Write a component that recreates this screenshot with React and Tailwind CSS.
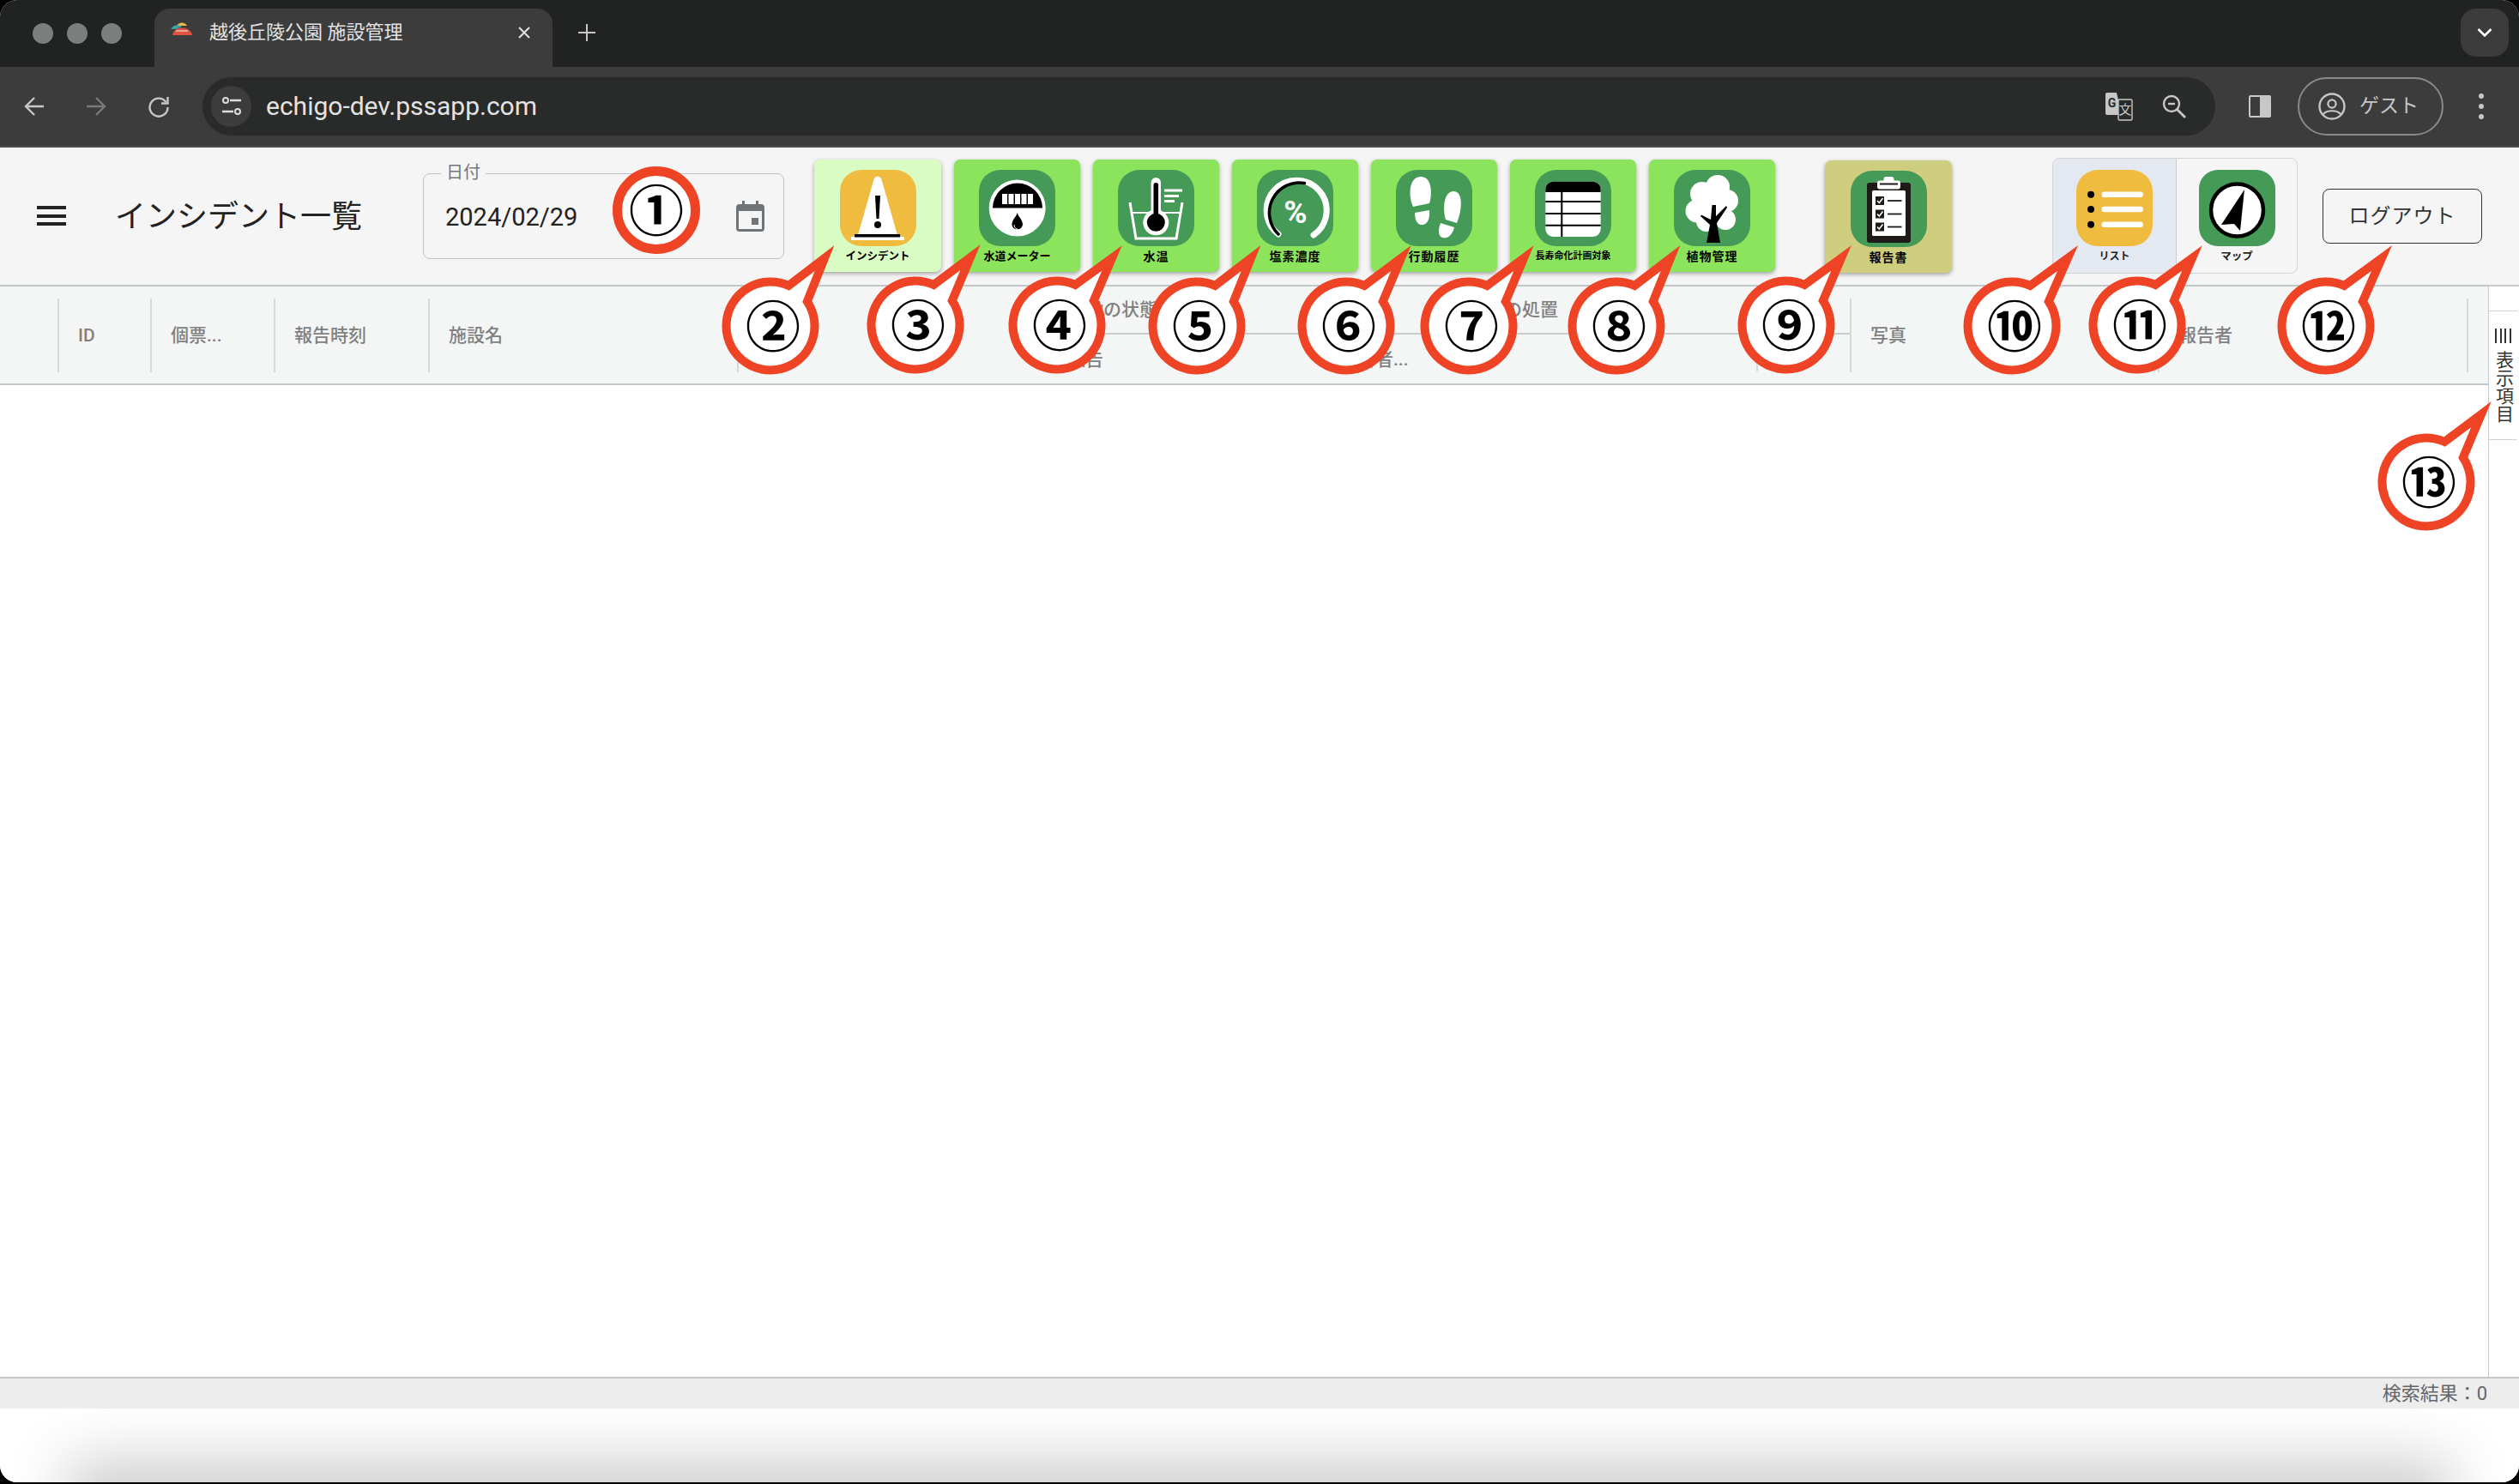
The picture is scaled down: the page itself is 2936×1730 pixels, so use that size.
import React from "react";

const YELLOW = "#efbc3f";
const GREEN = "#449a56";

function IconBox({ color = GREEN, children }) {
  return (
    <svg viewBox="0 0 89 89" className="block h-[89px] w-[89px]">
      <rect width="89" height="89" rx="25" fill={color} />
      {children}
    </svg>
  );
}

const IncidentIcon = () => (
  <IconBox color={YELLOW}>
    <path d="M39 13 C40 6 48 6 49 13 L67 76 L21 76 Z" fill="#fff" />
    <rect x="13" y="78" width="62" height="4" fill="#fff" />
    <rect x="17" y="75" width="53" height="3.5" fill="#000" />
    <path d="M41 30 L47 30 L45.5 57 L42.5 57 Z" fill="#000" />
    <circle cx="44" cy="64" r="4" fill="#000" />
  </IconBox>
);

const MeterIcon = () => (
  <IconBox>
    <circle cx="44.7" cy="44.5" r="33" fill="#fff" />
    <path d="M16 44.5 A29 29 0 0 1 74 44.5 Z" fill="#000" />
    {[27, 34.5, 42, 49.5, 57].map((x) => (
      <rect key={x} x={x} y="28" width="6" height="12" fill="#fff" />
    ))}
    <path d="M44.7 50 C46 55 51 58 51 64 A6.4 6.4 0 0 1 38.4 64 C38.4 58 43.5 55 44.7 50 Z" fill="#000" />
    <path d="M41 64 C41 67 43 69 45 69" stroke="#fff" strokeWidth="1" fill="none" />
  </IconBox>
);

const WaterTempIcon = () => (
  <IconBox>
    <path d="M14 38 L21 80 L68 80 L75 38" stroke="#fff" strokeWidth="3" fill="none" />
    <path d="M17 50 H72" stroke="#fff" strokeWidth="2" />
    <path d="M54 24 H75 M54 30.5 H71 M54 36.5 H66" stroke="#fff" strokeWidth="3" />
    <rect x="38.6" y="9" width="11.4" height="48" rx="5.7" fill="#fff" />
    <circle cx="44.3" cy="61.3" r="15" fill="#fff" />
    <rect x="41.5" y="15" width="5.6" height="44" rx="2.8" fill="#000" />
    <circle cx="44.3" cy="61.3" r="10.5" fill="#000" />
  </IconBox>
);

const ChlorineIcon = () => (
  <IconBox>
    <path d="M25 75 A35 35 0 1 1 66 76" stroke="#fff" strokeWidth="7" strokeLinecap="round" fill="none" />
    <path d="M25 75 A35 35 0 0 1 55.5 15.5" stroke="#000" strokeWidth="3.6" strokeLinecap="round" fill="none" />
    <text x="45" y="62" textAnchor="middle" fontSize="37" fontWeight="700" fill="#fff" fontFamily="Roboto, sans-serif">%</text>
  </IconBox>
);

const StepsIcon = () => (
  <IconBox>
    <g fill="#fff">
      <path d="M20 43 C14 30 15 8 29 8 C43 8 42 30 39 39 Z" />
      <path d="M22 50 L39 47 C40 58 36 65 29 64 C24 63 22 57 22 50 Z" />
      <path d="M58 58 C54 45 56 25 67 25 C78 25 78 44 71 62 Z" />
      <path d="M52 62 L68 67 C66 76 60 81 54 79 C49 77 49 70 52 62 Z" />
    </g>
  </IconBox>
);

const TableIcon = () => (
  <IconBox>
    <rect x="12.3" y="13.7" width="64.4" height="64.3" rx="9" fill="#fff" />
    <path d="M12.3 26 V22.7 A9 9 0 0 1 21.3 13.7 H67.7 A9 9 0 0 1 76.7 22.7 V26 Z" fill="#000" />
    <path d="M12.3 37 H76.7 M12.3 51 H76.7 M12.3 64.7 H76.7 M31.3 25 V78" stroke="#000" strokeWidth="2" />
  </IconBox>
);

const TreeIcon = () => (
  <IconBox>
    <g fill="#fff">
      <circle cx="51" cy="20" r="14" />
      <circle cx="33" cy="28" r="14" />
      <circle cx="27" cy="48" r="13.5" />
      <circle cx="62" cy="36" r="13" />
      <circle cx="60" cy="58" r="12" />
      <circle cx="38" cy="60" r="12" />
      <circle cx="45" cy="40" r="21" />
    </g>
    <path d="M38 85 L42 64 L31 54 L32 52.5 L43 58 L44.5 41 L49 41 L49 54 L61 42 L62 44 L50 62 L54 85 Z" fill="#000" />
  </IconBox>
);

const ReportIcon = () => (
  <IconBox>
    <rect x="19" y="14" width="51" height="70" rx="3" fill="#1f1a17" />
    <rect x="25" y="23" width="39" height="53" rx="1.5" fill="#fff" />
    <rect x="38.5" y="7" width="12" height="8" rx="3" fill="#fff" />
    <rect x="31" y="11.5" width="27" height="10" rx="3" fill="#fff" />
    <rect x="34" y="14.5" width="21" height="2" fill="#1f1a17" />
    {[35, 50.5, 65.5].map((y) => (
      <g key={y}>
        <rect x="29" y={y - 5} width="10" height="10" fill="#1f1a17" />
        <path d={`M31 ${y} L33.3 ${y + 2.5} L37.5 ${y - 3}`} stroke="#fff" strokeWidth="1.5" fill="none" />
        <path d={`M43 ${y} H59.5`} stroke="#1f1a17" strokeWidth="1.8" />
      </g>
    ))}
  </IconBox>
);

const ListIcon = () => (
  <IconBox color={YELLOW}>
    {[28.7, 46, 63.7].map((y) => (
      <g key={y}>
        <circle cx="17" cy={y} r="4" fill="#000" />
        <rect x="29.5" y={y - 3.3} width="48.5" height="6.6" rx="3.3" fill="#fff" />
      </g>
    ))}
  </IconBox>
);

const MapIcon = () => (
  <svg viewBox="0 0 89 89" className="block h-[89px] w-[89px]">
    <rect width="89" height="89" rx="22" fill={GREEN} />
    <circle cx="44.5" cy="47" r="30.5" fill="#fff" stroke="#000" strokeWidth="4.5" />
    <path d="M53 23 L26 64 L41 63 L48 71 Z" fill="#000" />
  </svg>
);

function Tile({ bg, label, labelClass, Icon, width = "w-[147px]" }) {
  return (
    <div className={`flex h-[131px] flex-col items-center rounded-[7px] pt-[12px] shadow-[0_2px_5px_rgba(0,0,0,0.35)] ${width} ${bg}`}>
      <Icon />
      <span className={`mt-[3px] whitespace-nowrap font-bold leading-[18px] text-black ${labelClass}`}>{label}</span>
    </div>
  );
}

// numbered callout balloons drawn on top of the screenshot
const CALLOUTS = [
  ["②", 898, 380, 978, 283],
  ["③", 1067, 379, 1148, 282],
  ["④", 1232, 379, 1313, 283],
  ["⑤", 1395, 380, 1475, 283],
  ["⑥", 1569, 380, 1650, 283],
  ["⑦", 1712, 380, 1793, 283],
  ["⑧", 1884, 380, 1964, 283],
  ["⑨", 2082, 379, 2163, 283],
  ["⑩", 2345, 380, 2427, 283],
  ["⑪", 2491, 379, 2572, 283],
  ["⑫", 2711, 380, 2793, 283],
  ["⑬", 2828, 562, 2909, 465],
];

function balloonPath(cx, cy, tx, ty) {
  const r = 51.5;
  const a1 = (-33.7 * Math.PI) / 180;
  const a2 = (-65.7 * Math.PI) / 180;
  const x1 = cx + r * Math.cos(a1);
  const y1 = cy + r * Math.sin(a1);
  const x2 = cx + r * Math.cos(a2);
  const y2 = cy + r * Math.sin(a2);
  return `M${x1} ${y1} A${r} ${r} 0 1 1 ${x2} ${y2} L${tx - 17} ${ty + 18} Z`;
}

function Callouts() {
  const textProps = {
    textAnchor: "middle",
    dominantBaseline: "central",
    fontSize: 64,
    fontWeight: 700,
    fill: "#000",
    fontFamily: "'Noto Sans CJK JP', sans-serif",
  };
  return (
    <svg className="pointer-events-none absolute left-0 top-0" width="2936" height="1730">
      <circle cx="765" cy="245" r="45.5" fill="#fff" stroke="#ee4324" strokeWidth="11" />
      <text x="765" y="241" {...textProps}>①</text>
      {CALLOUTS.map(([n, cx, cy, tx, ty]) => (
        <g key={n}>
          <path d={balloonPath(cx, cy, tx, ty)} fill="#fff" stroke="#ee4324" strokeWidth="10" strokeMiterlimit="10" />
          <text x={cx + 3} y={cy - 4} {...textProps}>{n}</text>
        </g>
      ))}
    </svg>
  );
}

function BrowserChrome() {
  return (
    <>
      <div className="flex h-[78px] items-end bg-[#212322] pl-[38px]">
        <div className="mb-[27px] flex gap-[16px]">
          <div className="h-[24px] w-[24px] rounded-full bg-[#7c7e7d]" />
          <div className="h-[24px] w-[24px] rounded-full bg-[#7c7e7d]" />
          <div className="h-[24px] w-[24px] rounded-full bg-[#7c7e7d]" />
        </div>
        <div className="ml-[38px] flex h-[68px] w-[464px] items-start rounded-t-[18px] bg-[#3c3c3c] pl-[18px] pt-[14px]">
          <svg viewBox="0 0 28 18" className="h-[18px] w-[28px]">
            <path d="M8 6 A7 7 0 0 1 20 6 Z" fill="#eab94a" />
            <path d="M1 10 C4 5 9 4 14 7 L7 10 Z" fill="#3aa79a" />
            <path d="M3 17 C4 11 9 8.5 14 8.5 C19 8.5 25 11 26 17 Z" fill="#e0523f" />
            <path d="M7 12 H21" stroke="#f5f5f5" strokeWidth="1" />
          </svg>
          <span className="ml-[18px] w-[359px] text-[22px] leading-[28px] text-[#e3e3e3]">越後丘陵公園 施設管理</span>
          <svg viewBox="0 0 16 16" className="mt-[6px] h-[16px] w-[16px]">
            <path d="M2 2 L14 14 M14 2 L2 14" stroke="#e3e3e3" strokeWidth="2" />
          </svg>
        </div>
        <svg viewBox="0 0 20 20" className="mb-[30px] ml-[30px] h-[20px] w-[20px]">
          <path d="M10 0 V20 M0 10 H20" stroke="#c7c7c7" strokeWidth="2" />
        </svg>
        <div className="ml-auto mb-[12px] mr-[12px] flex h-[56px] w-[56px] items-center justify-center rounded-[18px] bg-[#3c3c3c]">
          <svg viewBox="0 0 18 12" className="h-[12px] w-[18px]">
            <path d="M1.5 2 L9 9.5 L16.5 2" stroke="#fff" strokeWidth="2.6" fill="none" />
          </svg>
        </div>
      </div>
      <div className="flex h-[94px] items-center border-b-[2px] border-[#4c4c4c] bg-[#3c3c3c] pl-[28px]">
        <svg viewBox="0 0 24 24" className="h-[24px] w-[24px]">
          <path d="M23 12 H2 M12 2 L2 12 L12 22" stroke="#c7c7c7" strokeWidth="2.4" fill="none" />
        </svg>
        <svg viewBox="0 0 24 24" className="ml-[48px] h-[24px] w-[24px]">
          <path d="M1 12 H22 M12 2 L22 12 L12 22" stroke="#7a7a7a" strokeWidth="2.4" fill="none" />
        </svg>
        <svg viewBox="0 0 26 26" className="ml-[48px] h-[26px] w-[26px]">
          <path d="M21.5 8 A10.5 10.5 0 1 0 23.5 14" stroke="#c7c7c7" strokeWidth="2.4" fill="none" />
          <path d="M23.5 2 V9.5 H16" stroke="#c7c7c7" strokeWidth="2.4" fill="none" />
        </svg>
        <div className="ml-[38px] flex h-[68px] w-[2346px] items-center rounded-full bg-[#292a2a] pl-[10px]">
          <div className="flex h-[48px] w-[47px] items-center justify-center rounded-full bg-[#3c3c3c]">
            <svg viewBox="0 0 24 24" className="h-[24px] w-[24px]">
              <circle cx="5" cy="5" r="3" stroke="#dcdcdc" strokeWidth="2" fill="none" />
              <path d="M10 5 H23 M1 18 H14" stroke="#dcdcdc" strokeWidth="2.6" />
              <circle cx="19" cy="18" r="3" stroke="#dcdcdc" strokeWidth="2" fill="none" />
            </svg>
          </div>
          <span className="ml-[17px] font-['Roboto',sans-serif] text-[30px] leading-[34px] text-[#e3e3e3]">echigo-dev.pssapp.com</span>
          <svg viewBox="0 0 33 33" className="ml-auto h-[33px] w-[33px]">
            <path d="M1 2 A2 2 0 0 1 3 0 H14 L20 26 H3 A2 2 0 0 1 1 24 Z" fill="#c7c7c7" />
            <text x="8.5" y="17" textAnchor="middle" fontSize="14" fontWeight="700" fill="#292a2a" fontFamily="Roboto, sans-serif">G</text>
            <rect x="16" y="8" width="16" height="24" rx="1.5" fill="#292a2a" stroke="#c7c7c7" strokeWidth="1.4" />
            <text x="24" y="25" textAnchor="middle" fontSize="15" fill="#c7c7c7" fontFamily="'Noto Sans CJK JP', sans-serif">文</text>
          </svg>
          <svg viewBox="0 0 28 28" className="ml-[34px] mr-[34px] h-[28px] w-[28px]">
            <circle cx="11" cy="11" r="9" stroke="#c7c7c7" strokeWidth="2.4" fill="none" />
            <path d="M7 11 H15" stroke="#c7c7c7" strokeWidth="2.4" />
            <path d="M17 17 L27 27" stroke="#c7c7c7" strokeWidth="2.8" />
          </svg>
        </div>
        <svg viewBox="0 0 28 28" className="ml-[38px] h-[28px] w-[28px]">
          <rect x="1" y="1" width="26" height="26" rx="2" fill="#c7c7c7" />
          <rect x="3" y="3" width="11" height="22" fill="#3c3c3c" />
        </svg>
        <div className="ml-[30px] flex h-[68px] w-[170px] items-center rounded-full border-[2px] border-[#8a8a8a] pl-[22px]">
          <svg viewBox="0 0 32 32" className="h-[32px] w-[32px]">
            <circle cx="16" cy="16" r="14.5" stroke="#c7c7c7" strokeWidth="2.4" fill="none" />
            <circle cx="16" cy="13" r="4.6" stroke="#c7c7c7" strokeWidth="2.2" fill="none" />
            <path d="M6 25 C10 20 22 20 26 25" stroke="#c7c7c7" strokeWidth="2.2" fill="none" />
          </svg>
          <span className="ml-[16px] text-[23px] leading-[30px] text-[#c7c7c7]">ゲスト</span>
        </div>
        <div className="ml-[41px] flex flex-col gap-[6px]">
          <div className="h-[6px] w-[6px] rounded-full bg-[#c7c7c7]" />
          <div className="h-[6px] w-[6px] rounded-full bg-[#c7c7c7]" />
          <div className="h-[6px] w-[6px] rounded-full bg-[#c7c7c7]" />
        </div>
      </div>
    </>
  );
}

function AppBar() {
  return (
    <div className="flex h-[160px] items-start bg-[#f5f5f5]">
      <div className="ml-[43px] mt-[68px] flex h-[23px] w-[34px] flex-col justify-between">
        <div className="h-[4px] bg-[#222]" />
        <div className="h-[4px] bg-[#222]" />
        <div className="h-[4px] bg-[#222]" />
      </div>
      <h1 className="ml-[57px] mt-[58px] w-[359px] text-[36px] font-normal leading-[46px] text-[#222]">インシデント一覧</h1>
      <div className="relative mt-[30px] flex h-[100px] w-[421px] items-center rounded-[8px] border border-[#bfc3c6] pl-[25px]">
        <span className="absolute left-[20px] top-[-15px] bg-[#f5f5f5] px-[6px] text-[20px] leading-[26px] text-[#777]">日付</span>
        <span className="mt-[1px] font-['Roboto',sans-serif] text-[29px] leading-[34px] text-[#222]">2024/02/29</span>
        <svg viewBox="0 0 33 36" className="ml-auto mr-[22px] h-[36px] w-[33px]">
          <path d="M7 0 H10 V4 H23 V0 H26 V4 H29 A4 4 0 0 1 33 8 V32 A4 4 0 0 1 29 36 H4 A4 4 0 0 1 0 32 V8 A4 4 0 0 1 4 4 H7 Z" fill="#6e7478" />
          <rect x="3" y="12" width="27" height="21" fill="#f5f5f5" />
          <rect x="18" y="20" width="8" height="8" fill="#6e7478" />
        </svg>
      </div>
      <div className="ml-[35px] mt-[14px] flex gap-[15px]">
        <Tile bg="bg-[#d9fcc2]" width="w-[148px]" label="インシデント" labelClass="text-[12.5px]" Icon={IncidentIcon} />
        <Tile bg="bg-[#8ce45c]" label="水道メーター" labelClass="text-[13px]" Icon={MeterIcon} />
        <Tile bg="bg-[#8ce45c]" label="水温" labelClass="text-[14px] tracking-[1px]" Icon={WaterTempIcon} />
        <Tile bg="bg-[#8ce45c]" label="塩素濃度" labelClass="text-[14px] tracking-[1px]" Icon={ChlorineIcon} />
        <Tile bg="bg-[#8ce45c]" label="行動履歴" labelClass="text-[14px] tracking-[1px]" Icon={StepsIcon} />
        <Tile bg="bg-[#8ce45c]" label="長寿命化計画対象" labelClass="text-[11px]" Icon={TableIcon} />
        <Tile bg="bg-[#8ce45c]" label="植物管理" labelClass="text-[14px] tracking-[1px]" Icon={TreeIcon} />
      </div>
      <div className="ml-[58px] mt-[15px]">
        <Tile bg="bg-[#cfce7e]" width="w-[148px]" label="報告書" labelClass="text-[14px] tracking-[1px]" Icon={ReportIcon} />
      </div>
      <div className="ml-[117px] mt-[12px] flex h-[135px] w-[286px] rounded-[8px] border border-[#d2d4d6]">
        <div className="flex w-[144px] flex-col items-center rounded-l-[8px] border-r border-[#c8ccd2] bg-[#e4e9f1] pt-[13px]">
          <ListIcon />
          <span className="mt-[3px] text-[12px] font-bold leading-[18px] text-[#222]">リスト</span>
        </div>
        <div className="flex flex-1 flex-col items-center pt-[13px]">
          <MapIcon />
          <span className="mt-[3px] text-[12.5px] font-bold leading-[18px] text-[#222]">マップ</span>
        </div>
      </div>
      <div className="ml-[29px] mt-[48px] flex h-[64px] w-[186px] items-center justify-center rounded-[8px] border-[1.5px] border-[#333] text-[24px] tracking-[1px] text-[#333]">ログアウト</div>
    </div>
  );
}

function HeaderCell({ width, children }) {
  return (
    <div className={`flex h-[86px] items-center border-r-[2px] border-[#d6d9db] pl-[22px] ${width}`}>
      {children}
    </div>
  );
}

function TableHeader() {
  return (
    <div className="flex h-[117px] items-center border-y-[2px] border-[#c2c7ca] bg-[#f4f6f6] text-[21px] font-medium leading-[28px] text-[#808080]">
      <div className="h-[86px] w-[69px] border-r-[2px] border-[#d6d9db]" />
      <HeaderCell width="w-[108px]">ID</HeaderCell>
      <HeaderCell width="w-[144px]">個票...</HeaderCell>
      <HeaderCell width="w-[180px]">報告時刻</HeaderCell>
      <HeaderCell width="w-[360px]">施設名</HeaderCell>
      <div className="h-[86px] w-[361px]" />
      <div className="flex h-[113px] w-[934px] flex-col">
        <div className="flex h-[56px] items-center border-b-[2px] border-[#c9cdd0]">
          <div className="w-[467px] pl-[22px]">施設の状態</div>
          <div className="pl-[22px]">施設の処置</div>
        </div>
        <div className="flex h-[57px] items-center">
          <div className="w-[320px] pl-[22px]">報告</div>
          <div className="w-[147px] pl-[19px]">報告者...</div>
          <div className="h-[43px] w-[360px] self-start border-r-[2px] border-[#d6d9db] pl-[22px] pt-[6px]">報告</div>
        </div>
      </div>
      <div className="h-[86px] w-[2px] bg-[#d6d9db]" />
      <HeaderCell width="w-[359px]">写真</HeaderCell>
      <HeaderCell width="w-[360px]">報告者</HeaderCell>
      <div className="w-[23px]" />
    </div>
  );
}

export default function App() {
  return (
    <div className="relative h-[1730px] w-[2936px] overflow-hidden bg-black font-['Roboto','Noto_Sans_CJK_JP',sans-serif]">
      <div className="flex h-[1728px] flex-col overflow-hidden rounded-[20px] bg-white">
        <BrowserChrome />
        <AppBar />
        <div className="flex h-[1273px]">
          <div className="flex-1">
            <TableHeader />
          </div>
          <div className="flex w-[37px] flex-col border-l border-t-[2px] border-[#c8cbcd] bg-white pr-[2px]">
            <div className="mt-[28px] flex h-[151px] flex-col items-center border-y border-[#d0d3d5] pt-[20px]">
              <div className="flex h-[17px] w-[19px] justify-between">
                <div className="w-[2px] bg-[#333]" />
                <div className="w-[2px] bg-[#333]" />
                <div className="w-[2px] bg-[#333]" />
                <div className="w-[2px] bg-[#333]" />
              </div>
              <span className="mt-[9px] text-[21px] leading-[22px] text-[#333] [writing-mode:vertical-rl]">表示項目</span>
            </div>
          </div>
        </div>
        <div className="flex h-[37px] items-center justify-end border-t-[2px] border-[#c6c6c6] bg-[#ededed] pr-[37px] text-[22px] text-[#666]">検索結果：0</div>
        <div className="flex h-[86px] justify-center overflow-hidden bg-white">
          <div className="mt-[100px] h-[40px] w-[2700px] shadow-[0_0_70px_40px_rgba(0,0,0,0.2)]" />
        </div>
      </div>
      <Callouts />
    </div>
  );
}
